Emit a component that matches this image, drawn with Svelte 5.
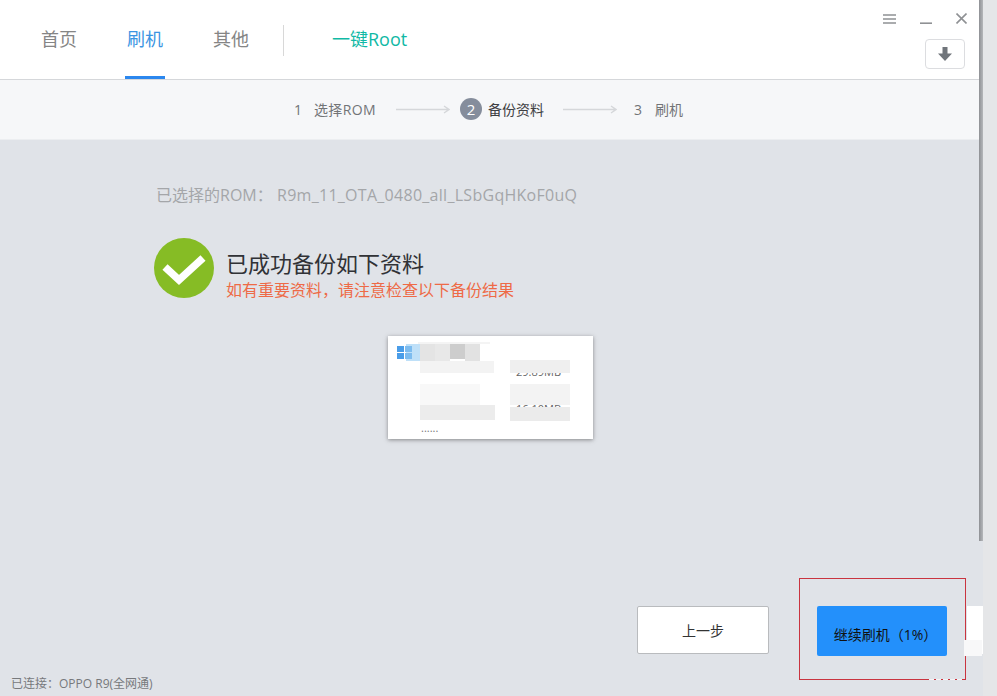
<script>
  const tabs = [
    { label: "首页" },
    { label: "刷机", active: true },
    { label: "其他" },
  ];

  // blurred patches in the backup preview card
  const patches = [
    { x: 32, y: 8, w: 15, h: 17, c: "#e4e4e4" },
    { x: 47, y: 8, w: 15, h: 17, c: "#e8e8e8" },
    { x: 62, y: 8, w: 15, h: 15, c: "#cdcdcd" },
    { x: 77, y: 8, w: 15, h: 17, c: "#e2e2e2" },
    { x: 32, y: 25, w: 74, h: 12, c: "#f3f3f3" },
    { x: 122, y: 24, w: 60, h: 13, c: "#efefef" },
    { x: 32, y: 48, w: 60, h: 21, c: "#f8f8f8" },
    { x: 122, y: 48, w: 60, h: 21, c: "#f3f3f3" },
    { x: 32, y: 69, w: 75, h: 15, c: "#ececec" },
    { x: 122, y: 71, w: 60, h: 14, c: "#ebebeb" },
  ];
</script>

<div class="page">
  <div class="window">
    <header>
      <nav>
        {#each tabs as t}
          <span class="tab" class:active={t.active}>{t.label}</span>
        {/each}
        <span class="divider"></span>
        <span class="root">一键Root</span>
      </nav>
      <div class="controls">
        <div class="win-btns">
          <svg width="13" height="10" viewBox="0 0 13 10"><path d="M0 1h13M0 5h13M0 9h13" stroke="#8f9194" stroke-width="1.6" /></svg>
          <svg width="12" height="10" viewBox="0 0 12 10"><path d="M0 9.2h12" stroke="#8f9194" stroke-width="1.6" /></svg>
          <svg width="11" height="11" viewBox="0 0 11 11"><path d="M0.5 0.5l10 10M10.5 0.5l-10 10" stroke="#8f9194" stroke-width="1.6" /></svg>
        </div>
        <button class="download" aria-label="下载">
          <svg width="14" height="14" viewBox="0 0 14 14"><path d="M4.5 0h5v6.5H14L7 14 0 6.5h4.5z" fill="#70757b" /></svg>
        </button>
      </div>
    </header>

    <div class="steps">
      <span class="num">1</span>
      <span class="step rom-step">选择ROM</span>
      <svg class="arrow" width="54" height="9" viewBox="0 0 54 9"><path d="M0 4.5h53M48 1l5 3.5-5 3.5" fill="none" stroke="#d5d7da" stroke-width="1.4" /></svg>
      <span class="badge">2</span>
      <span class="step current">备份资料</span>
      <svg class="arrow second" width="54" height="9" viewBox="0 0 54 9"><path d="M0 4.5h53M48 1l5 3.5-5 3.5" fill="none" stroke="#d5d7da" stroke-width="1.4" /></svg>
      <span class="num third">3</span>
      <span class="step">刷机</span>
    </div>

    <main>
      <p class="rom"><span class="rom-label">已选择的ROM&#xFF1A;</span><span class="rom-name">R9m_11_OTA_0480_all_LSbGqHKoF0uQ</span></p>

      <div class="result">
        <svg class="check" width="60" height="60" viewBox="0 0 60 60">
          <circle cx="30" cy="30" r="30" fill="#86bc25" />
          <path d="M11 29l14 13 24-22" fill="none" stroke="#fff" stroke-width="7.5" />
        </svg>
        <div class="result-text">
          <h2>已成功备份如下资料</h2>
          <p class="warn">如有重要资料&#xFF0C;请注意检查以下备份结果</p>
        </div>
      </div>

      <div class="card">
        <span class="haze"></span>
        <span class="size one">29.89MB</span>
        <span class="size two">16.10MB</span>
        {#each patches as p}
          <span class="patch" style="left:{p.x}px;top:{p.y}px;width:{p.w}px;height:{p.h}px;background:{p.c}"></span>
        {/each}
        <span class="glow"></span>
        <span class="squares"><i></i><i class="cut"></i><i></i><i class="cut"></i></span>
        <span class="dots">......</span>
      </div>

      <div class="actions">
        <button class="prev">上一步</button>
        <div class="highlight">
          <button class="next">继续刷机&#xFF08;1%&#xFF09;</button>
          <span class="mark-bottom"></span>
        </div>
        <span class="stub"></span>
        <span class="mark-side"></span>
      </div>

      <footer>已连接&#xFF1A;OPPO R9(全网通)</footer>
    </main>
  </div>

  <div class="side">
    <span class="thumb"></span>
  </div>
</div>

<style>
  :global(*, *::before, *::after) {
    box-sizing: border-box;
  }

  :global(body) {
    margin: 0;
    padding: 0;
    overflow: hidden;
    background: #e4e5e7;
    font-family: "Open Sans", "Noto Sans CJK SC", sans-serif;
  }

  .page {
    display: flex;
    width: 997px;
    height: 696px;
    overflow: hidden;
  }

  .window {
    display: flex;
    flex-direction: column;
    width: 979px;
    height: 696px;
    flex: none;
    background: #e0e3e8;
  }

  .side {
    flex: 1;
    background: linear-gradient(to right, #e0e3e8 4px, #e5e6e8 4px);
  }

  .thumb {
    display: block;
    width: 4px;
    height: 541px;
    background: linear-gradient(to right, #8e9094, #b5b7ba);
  }

  header {
    display: flex;
    justify-content: space-between;
    height: 80px;
    flex: none;
    padding-left: 41px;
    background: #fff;
    border-bottom: 1px solid #d5d7da;
  }

  nav {
    display: flex;
    align-items: flex-start;
  }

  .tab {
    position: relative;
    width: 36px;
    height: 79px;
    margin-right: 50px;
    padding-top: 26px;
    font-size: 18px;
    line-height: 26px;
    color: #858585;
    white-space: nowrap;
  }

  .tab.active {
    color: #3b94e2;
  }

  .tab.active::after {
    content: "";
    position: absolute;
    left: -2px;
    right: -2px;
    bottom: 0;
    height: 3px;
    background: #2b87ee;
  }

  .divider {
    width: 1px;
    height: 31px;
    margin-top: 25px;
    margin-left: -16px;
    background: #d8d8d8;
  }

  .root {
    margin-left: 48px;
    padding-top: 26px;
    font-size: 18px;
    line-height: 26px;
    color: #10b9a5;
  }

  .controls {
    display: flex;
    flex-direction: column;
    align-items: flex-end;
    padding: 13px 12px 0 0;
  }

  .win-btns {
    display: flex;
    align-items: center;
    gap: 24px;
    height: 11px;
  }

  .download {
    display: flex;
    align-items: center;
    justify-content: center;
    width: 40px;
    height: 30px;
    margin: 15px 2px 0 0;
    padding: 0;
    background: #fff;
    border: 1px solid #dcdde0;
    border-radius: 4px;
  }

  .steps {
    display: flex;
    align-items: center;
    justify-content: center;
    height: 60px;
    flex: none;
    padding: 0 2px 1px 0;
    background: #f6f7f9;
    border-bottom: 1px solid #eceef1;
    font-size: 14px;
    color: #727477;
  }

  .num {
    margin-right: 12px;
  }

  .num.third {
    margin-left: 17px;
    margin-right: 13px;
  }

  .rom-step {
    letter-spacing: 0.4px;
  }

  .arrow {
    margin: 0 10px 0 20px;
  }

  .arrow.second {
    margin: 0 0 0 19px;
  }

  .badge {
    display: flex;
    align-items: center;
    justify-content: center;
    width: 22px;
    height: 22px;
    margin-right: 6px;
    border-radius: 50%;
    background: #858d9c;
    color: #fff;
    font-size: 15px;
  }

  .step.current {
    color: #3e4043;
  }

  main {
    position: relative;
    flex: 1;
    padding: 44px 0 0 156px;
  }

  .rom {
    display: flex;
    margin: 0;
    font-size: 16px;
    line-height: 22px;
    color: #a4a6a9;
  }

  .rom-label {
    width: 121px;
  }

  .rom-name {
    letter-spacing: 0.28px;
  }

  .result {
    display: flex;
    align-items: flex-start;
    gap: 12px;
    margin-top: 32px;
    margin-left: -2px;
  }

  .check {
    flex: none;
  }

  .result-text {
    padding-top: 11px;
  }

  h2 {
    margin: 0;
    font-size: 22px;
    line-height: 28px;
    font-weight: 400;
    color: #303236;
  }

  .warn {
    margin: 1px 0 0;
    font-size: 16px;
    line-height: 24px;
    color: #ee6a46;
  }

  .card {
    position: relative;
    width: 205px;
    height: 103px;
    margin: 34px 0 0 232px;
    background: #fff;
    box-shadow: 0 1px 4px rgba(60, 60, 60, 0.55);
  }

  .haze {
    position: absolute;
    left: 30px;
    top: 6px;
    width: 72px;
    height: 2px;
    background: #f4f4f4;
  }

  .size {
    position: absolute;
    left: 128px;
    font-size: 11px;
    line-height: 14px;
    color: #666;
    white-space: nowrap;
  }

  .size.one {
    top: 29px;
  }

  .size.two {
    top: 66px;
  }

  .squares {
    position: absolute;
    left: 9px;
    top: 10px;
    display: grid;
    grid-template-columns: 7px 7px;
    gap: 1px;
  }

  .squares i {
    display: block;
    height: 6px;
    background: #4a9de8;
  }

  .squares i.cut {
    background: #7dbcef;
  }

  .glow {
    position: absolute;
    left: 18px;
    top: 8px;
    width: 14px;
    height: 17px;
    background: #bfe0f8;
  }

  .patch {
    position: absolute;
  }

  .dots {
    position: absolute;
    left: 33px;
    top: 84px;
    font-size: 11px;
    line-height: 16px;
    color: #777;
  }

  .actions {
    position: relative;
    z-index: 1;
    display: flex;
    align-items: center;
    height: 102px;
    margin-top: 139px;
    margin-left: 481px;
  }

  .prev {
    flex: none;
    width: 132px;
    height: 48px;
    margin-top: 2px;
    padding: 0;
    background: #fff;
    border: 1px solid #b9bbbe;
    border-radius: 2px;
    font-family: inherit;
    font-size: 14px;
    color: #333;
  }

  .highlight {
    position: relative;
    flex: none;
    display: flex;
    align-items: center;
    width: 167px;
    height: 102px;
    margin-left: 30px;
    padding-left: 17px;
    border: 1px solid #c9343f;
  }

  .next {
    width: 130px;
    height: 50px;
    margin-top: 4px;
    padding: 6px 0 0 7px;
    background: #2390fb;
    border: none;
    border-radius: 2px;
    font-family: inherit;
    font-size: 14px;
    color: #111;
  }

  .stub {
    flex: none;
    width: 16px;
    height: 48px;
    margin: 2px 0 0 1px;
    background: #fff;
  }

  .mark-bottom {
    position: absolute;
    left: 129px;
    right: 2px;
    bottom: -1px;
    height: 1px;
    background: repeating-linear-gradient(to right, #f4f4f6 0 5px, transparent 5px 7px);
  }

  .mark-side {
    position: absolute;
    left: 327px;
    top: 62px;
    width: 18px;
    height: 16px;
    background: #f8f8f9;
  }

  footer {
    position: absolute;
    left: 11px;
    bottom: 4px;
    font-size: 12px;
    line-height: 16px;
    color: #77797c;
  }
</style>
